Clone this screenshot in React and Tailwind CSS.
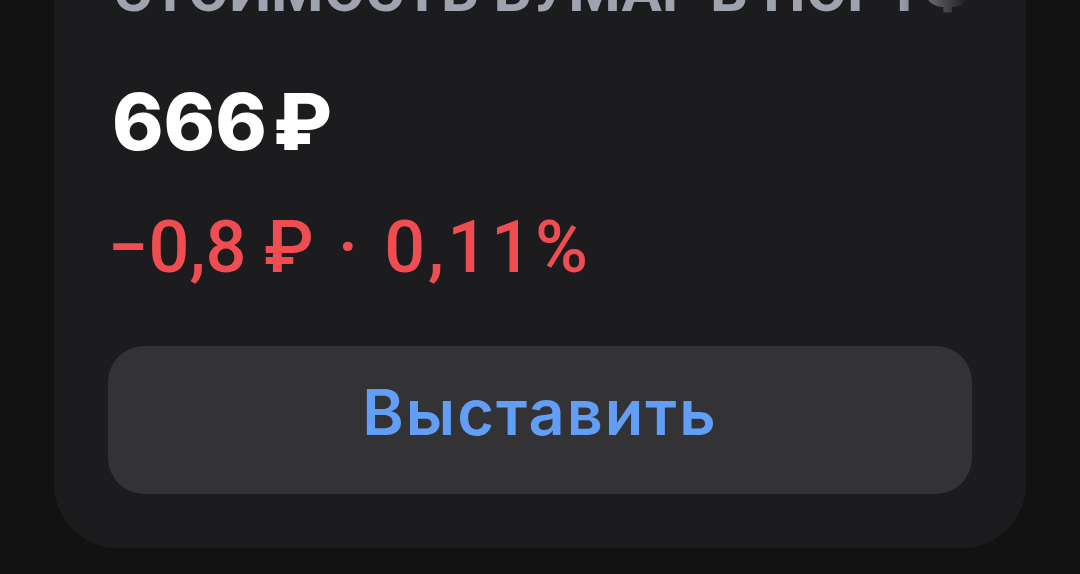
export default function App() {
  return (
    <div className="min-h-[574px] w-[1080px] overflow-hidden bg-[#121212] px-[54px]">
      <div className="flex h-[548px] flex-col rounded-b-[64px] bg-[#1c1c1e] px-[54px] pb-[54px]">
        <div
          className="mt-[-39px] whitespace-nowrap pl-[5px] text-[60px] font-bold uppercase leading-none text-transparent bg-clip-text bg-[linear-gradient(to_right,#9ea3ad_790px,rgba(158,163,173,0)_860px)]"
          style={{ fontFamily: "Roboto, 'Noto Sans', sans-serif" }}
        >
          Стоимость бумаг в портфеле
        </div>
        <div
          className="mt-[62px] whitespace-nowrap pl-[4px] text-[78px] font-extrabold leading-none text-white"
          style={{ fontFamily: "Inter, 'Noto Sans', sans-serif" }}
        >
          666<span className="ml-[6px]">₽</span>
        </div>
        <div
          className="mt-[51px] flex items-center whitespace-nowrap text-[72px] font-medium leading-none text-[#f04d52]"
          style={{ fontFamily: "Roboto, 'Noto Sans', sans-serif" }}
        >
          <span>−0,8 ₽</span>
          <span className="ml-[24px] mr-[26px]">·</span>
          <span className="tracking-[3px]">0,11%</span>
        </div>
        <button
          className="mt-[62px] flex h-[148px] w-full items-center justify-center rounded-[36px] bg-[#333335] pb-[15px] text-[63px] font-semibold leading-none tracking-[2px] text-[#629ef5]"
          style={{ fontFamily: "Inter, 'Noto Sans', sans-serif" }}
        >
          Выставить
        </button>
      </div>
    </div>
  );
}
